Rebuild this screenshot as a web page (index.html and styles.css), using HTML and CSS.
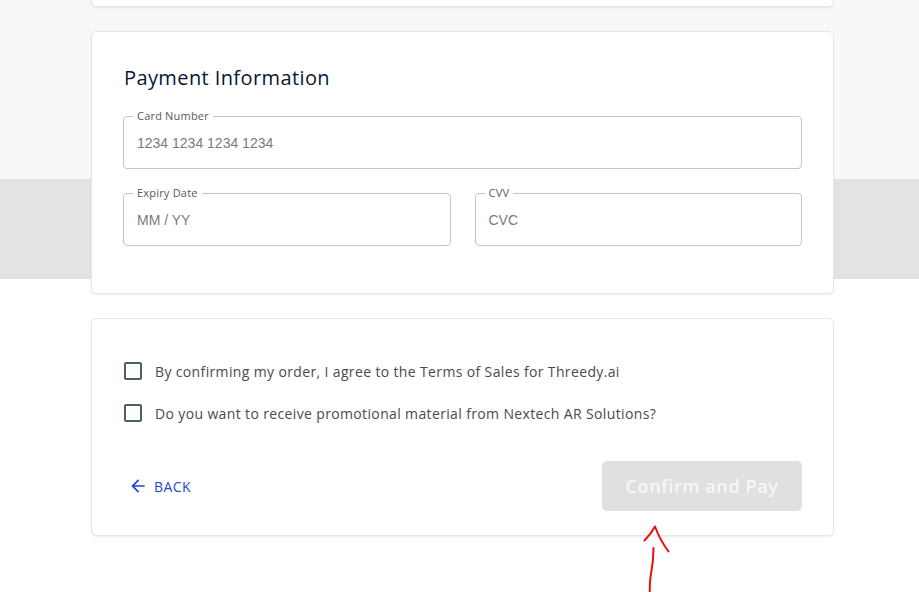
FILE: index.html
```html
<!DOCTYPE html>
<html lang="en">
<head>
<meta charset="utf-8">
<title>Payment</title>
<link rel="stylesheet" href="styles.css">
</head>
<body>
<main class="page">
  <section class="card card-prev"></section>

  <section class="card card-payment">
    <h2 class="card-title">Payment Information</h2>
    <div class="field">
      <span class="field-label">Card Number</span>
      <span class="field-placeholder">1234 1234 1234 1234</span>
    </div>
    <div class="field-row">
      <div class="field">
        <span class="field-label">Expiry Date</span>
        <span class="field-placeholder">MM / YY</span>
      </div>
      <div class="field">
        <span class="field-label">CVV</span>
        <span class="field-placeholder">CVC</span>
      </div>
    </div>
  </section>

  <section class="card card-confirm">
    <label class="check-row"><span class="checkbox"></span><span class="check-text">By confirming my order, I agree to the Terms of Sales for Threedy.ai</span></label>
    <label class="check-row"><span class="checkbox"></span><span class="check-text">Do you want to receive promotional material from Nextech AR Solutions?</span></label>
    <div class="actions">
      <button class="btn-back" type="button">
        <svg class="back-icon" viewBox="0 0 24 24" width="20" height="20"><path d="M20 11H7.83l5.59-5.59L12 4l-8 8 8 8 1.41-1.41L7.83 13H20v-2z" fill="currentColor"/></svg>
        <span>BACK</span>
      </button>
      <button class="btn-pay" type="button" disabled>Confirm and Pay</button>
    </div>
  </section>
</main>
<svg class="annotation" viewBox="0 0 50 80" width="50" height="80">
  <path d="M10 80 C9.5 70 9.5 62 11 54 C12.5 46 13.5 40 13.5 28" fill="none" stroke="#e8100e" stroke-width="2" stroke-linecap="round"/>
  <path d="M4.5 20.5 C8 17 11 14 15 6.5 C17 12 20 20 28.5 31.5" fill="none" stroke="#e8100e" stroke-width="2" stroke-linecap="round" stroke-linejoin="round"/>
</svg>
</body>
</html>
```
FILE: styles.css
```css
* { box-sizing: border-box; }
html, body { margin: 0; padding: 0; }
body {
  width: 919px;
  height: 592px;
  overflow: hidden;
  position: relative;
  font-family: "Open Sans", "DejaVu Sans", sans-serif;
  background: linear-gradient(to bottom, #f8f8fa 0, #f8f8fa 179px, #e3e3e3 179px, #e3e3e3 279px, #ffffff 279px);
}
.page {
  display: flex;
  flex-direction: column;
  gap: 24px;
  width: 743px;
  margin: -40px 0 0 91px;
}
.card {
  background: #fff;
  border: 1px solid #e6e6e8;
  border-radius: 5px;
  box-shadow: 0 1px 2px rgba(0,0,0,0.08);
}
.card-prev { height: 47px; }
.card-payment { padding: 31px 31px 47px 31px; }
.card-title {
  margin: 0 0 23px 1px;
  font-size: 20px;
  font-weight: 400;
  line-height: 30px;
  color: #0b1633;
  letter-spacing: 0.4px;
}
.field {
  position: relative;
  height: 53px;
  border: 1px solid #c4c4c4;
  border-radius: 4px;
  display: flex;
  align-items: center;
  padding-left: 13px;
}
.field-label {
  position: absolute;
  top: -9px;
  left: 9px;
  padding: 0 4px;
  background: #fff;
  font-size: 11px;
  line-height: 15px;
  letter-spacing: 0.2px;
  color: #5a5a5a;
}
.field-placeholder {
  font-family: "Liberation Sans", Arial, sans-serif;
  font-size: 14px;
  color: #7a7a7a;
}
.field-row {
  display: grid;
  grid-template-columns: 1fr 1fr;
  gap: 24px;
  margin-top: 24px;
}
.card-confirm { padding: 31px 31px 24px 32px; }
.check-row {
  display: flex;
  align-items: center;
  height: 42px;
  gap: 13px;
}
.checkbox {
  width: 18px;
  height: 18px;
  border: 2px solid #4b5f6b;
  border-radius: 2px;
  flex: none;
}
.check-text {
  font-size: 14px;
  color: #4a4a4a;
  letter-spacing: 0.36px;
}
.actions {
  display: flex;
  justify-content: space-between;
  align-items: center;
  margin-top: 27px;
}
.btn-back {
  display: flex;
  align-items: center;
  gap: 6px;
  background: none;
  border: 0;
  padding: 0 0 0 4px;
  color: #1f47cf;
  font-family: "Open Sans", sans-serif;
  font-size: 14px;
  font-weight: 500;
  letter-spacing: 0.4px;
  cursor: pointer;
}
.back-icon { flex: none; }
.btn-pay {
  width: 200px;
  height: 50px;
  border: 0;
  border-radius: 5px;
  background: #e0e0e0;
  color: #f6f6f6;
  font-family: "Open Sans", sans-serif;
  font-size: 18px;
  font-weight: 600;
  letter-spacing: 0.6px;
}
.annotation {
  position: absolute;
  left: 640px;
  top: 520px;
}
```
